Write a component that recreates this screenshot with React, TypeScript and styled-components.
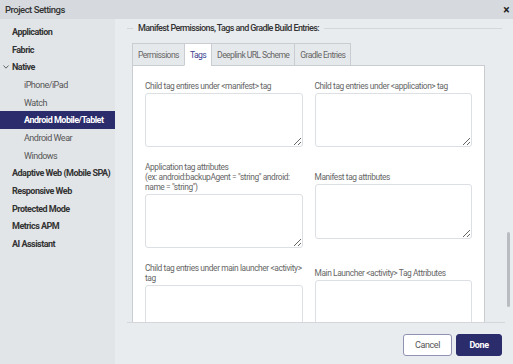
import React from "react";
import styled, { createGlobalStyle } from "styled-components";

const FONT = `Roboto, "Noto Sans", sans-serif`;

const GlobalStyle = createGlobalStyle`
  html, body { margin: 0; padding: 0; }
  body { font-family: ${FONT}; background: #e9ecef; }
  * { box-sizing: border-box; }
`;

const Dialog = styled.div`
  width: 513px;
  height: 364px;
  display: flex;
  flex-direction: column;
  overflow: hidden;
  font-family: ${FONT};
  white-space: nowrap;
`;

const Header = styled.div`
  height: 19px;
  flex: 0 0 19px;
  background: #d6dade;
  display: flex;
  align-items: center;
  justify-content: space-between;
  padding: 0 4px 0 5px;
  font-size: 9.5px;
  letter-spacing: -0.5px;
  font-weight: 500;
  color: #333;
`;

const Close = styled.span`
  font-size: 12px;
  font-weight: 700;
  color: #222;
`;

const Body = styled.div`
  flex: 1;
  display: flex;
  min-height: 0;
`;

const Sidebar = styled.nav`
  width: 115px;
  flex: 0 0 115px;
  background: #e2e5e8;
  padding-top: 4px;
  display: flex;
  flex-direction: column;
`;

const NavItem = styled.div<{ $level: number; $active?: boolean }>`
  height: 17.7px;
  display: flex;
  align-items: center;
  padding-left: ${(p) => (p.$level === 1 ? 24 : 12)}px;
  font-size: 9px;
  letter-spacing: -0.5px;
  font-weight: ${(p) => (p.$level === 1 && !p.$active ? 400 : 700)};
  color: ${(p) => (p.$active ? "#fff" : p.$level === 1 ? "#555" : "#333")};
  background: ${(p) => (p.$active ? "#2a2c6b" : "transparent")};
  position: relative;
`;

const Chevron = styled.svg`
  position: absolute;
  left: 3px;
  top: 7px;
`;

const Main = styled.div`
  flex: 1;
  background: #e9ecef;
  display: flex;
  flex-direction: column;
  position: relative;
  min-width: 0;
`;

const ScrollArea = styled.div`
  flex: 1;
  overflow: hidden;
  padding-left: 12px;
  min-height: 0;
`;

const SectionHeader = styled.div`
  display: flex;
  align-items: center;
  gap: 5px;
  height: 18px;
  padding-right: 11px;
  font-size: 9px;
  letter-spacing: -0.6px;
  font-weight: 500;
  color: #333;
`;

const Rule = styled.span<{ $grow?: boolean }>`
  height: 1px;
  background: #d3d7db;
  flex: ${(p) => (p.$grow ? "1" : "0 0 6px")};
`;

const TabBox = styled.div`
  margin: 6px 28px 0 5px;
`;

const TabRow = styled.div`
  display: flex;
  height: 23px;
  position: relative;
  z-index: 1;
`;

const Tab = styled.div<{ $active?: boolean }>`
  display: flex;
  align-items: center;
  padding: 0 5px;
  font-size: 8.6px;
  letter-spacing: -0.6px;
  color: ${(p) => (p.$active ? "#3e4191" : "#666")};
  background: ${(p) => (p.$active ? "#fff" : "#e6e9ec")};
  border: 1px solid #c9cdd2;
  border-bottom: ${(p) => (p.$active ? "1px solid #fff" : "1px solid #c9cdd2")};
  margin-left: -1px;
  &:first-child { margin-left: 0; }
`;

const Panel = styled.div`
  background: #fff;
  border: 1px solid #c9cdd2;
  margin-top: -1px;
  padding: 15px 12px 20px 12px;
  display: grid;
  grid-template-columns: 1fr 1fr;
  column-gap: 12px;
  row-gap: 15px;
  align-items: center;
`;

const Field = styled.div`
  display: flex;
  flex-direction: column;
  gap: 2px;
  min-width: 0;
`;

const Label = styled.label`
  font-size: 8.4px;
  letter-spacing: -0.4px;
  line-height: 10px;
  color: #666;
`;

const Area = styled.textarea<{ $h: number }>`
  width: 100%;
  height: ${(p) => p.$h}px;
  border: 1px solid #dcdfe3;
  border-radius: 3px;
  resize: vertical;
  font-family: ${FONT};
  display: block;
  margin: 0;
  outline: none;
`;

const Footer = styled.div`
  flex: 0 0 42px;
  margin-left: 12px;
  margin-right: 8px;
  border-top: 1px solid #d3d7db;
  display: flex;
  justify-content: flex-end;
  align-items: flex-start;
  gap: 4px;
  padding: 11px 3px 0 0;
`;

const Button = styled.button<{ $primary?: boolean }>`
  height: 22px;
  padding: 0;
  width: ${(p) => (p.$primary ? 46 : 49)}px;
  border-radius: 3px;
  font-family: ${FONT};
  font-size: 9px;
  letter-spacing: -0.4px;
  font-weight: ${(p) => (p.$primary ? 700 : 400)};
  color: ${(p) => (p.$primary ? "#fff" : "#555")};
  background: ${(p) => (p.$primary ? "#2a2c6b" : "#fff")};
  border: 1px solid ${(p) => (p.$primary ? "#2a2c6b" : "#8f91b5")};
`;

const Thumb = styled.div`
  position: absolute;
  right: 3px;
  top: 213px;
  width: 3px;
  height: 75px;
  border-radius: 2px;
  background: #b9bdc2;
`;

const nav: { label: string; level: number; active?: boolean; chevron?: boolean }[] = [
  { label: "Application", level: 0 },
  { label: "Fabric", level: 0 },
  { label: "Native", level: 0, chevron: true },
  { label: "iPhone/iPad", level: 1 },
  { label: "Watch", level: 1 },
  { label: "Android Mobile/Tablet", level: 1, active: true },
  { label: "Android Wear", level: 1 },
  { label: "Windows", level: 1 },
  { label: "Adaptive Web (Mobile SPA)", level: 0 },
  { label: "Responsive Web", level: 0 },
  { label: "Protected Mode", level: 0 },
  { label: "Metrics APM", level: 0 },
  { label: "AI Assistant", level: 0 },
];

export default function App() {
  return (
    <>
      <GlobalStyle />
      <Dialog>
        <Header>
          <span>Project Settings</span>
          <Close>×</Close>
        </Header>
        <Body>
          <Sidebar>
            {nav.map((n) => (
              <NavItem key={n.label} $level={n.level} $active={n.active}>
                {n.chevron && (
                  <Chevron width="6" height="4" viewBox="0 0 6 4">
                    <path d="M0.5 0.5 L3 3.2 L5.5 0.5" fill="none" stroke="#555" strokeWidth="0.9" />
                  </Chevron>
                )}
                {n.label}
              </NavItem>
            ))}
          </Sidebar>
          <Main>
            <ScrollArea>
              <SectionHeader>
                <Rule />
                <span>Manifest Permissions, Tags and Gradle Build Entries:</span>
                <Rule $grow />
              </SectionHeader>
              <TabBox>
                <TabRow>
                  <Tab>Permissions</Tab>
                  <Tab $active>Tags</Tab>
                  <Tab>Deeplink URL Scheme</Tab>
                  <Tab>Gradle Entries</Tab>
                </TabRow>
                <Panel>
                  <Field>
                    <Label>Child tag entires under &lt;manifest&gt; tag</Label>
                    <Area $h={54} />
                  </Field>
                  <Field>
                    <Label>Child tag entries under &lt;application&gt; tag</Label>
                    <Area $h={54} />
                  </Field>
                  <Field>
                    <Label>
                      Application tag attributes
                      <br />
                      (ex: android:backupAgent = "string" android:
                      <br />
                      name = "string")
                    </Label>
                    <Area $h={54} />
                  </Field>
                  <Field>
                    <Label>Manifest tag attributes</Label>
                    <Area $h={55} />
                  </Field>
                  <Field>
                    <Label>
                      Child tag entries under main launcher &lt;activity&gt;
                      <br />
                      tag
                    </Label>
                    <Area $h={54} />
                  </Field>
                  <Field>
                    <Label>Main Launcher &lt;activity&gt; Tag Attributes</Label>
                    <Area $h={54} />
                  </Field>
                </Panel>
              </TabBox>
            </ScrollArea>
            <Footer>
              <Button>Cancel</Button>
              <Button $primary>Done</Button>
            </Footer>
            <Thumb />
          </Main>
        </Body>
      </Dialog>
    </>
  );
}
